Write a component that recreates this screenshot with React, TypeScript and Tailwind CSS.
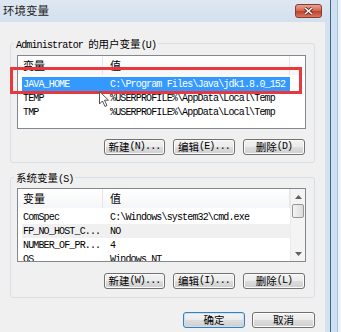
import React from "react";

type Var = { name: string; value: string; selected?: boolean; hover?: boolean };

const userVars: Var[] = [
  { name: "JAVA_HOME", value: "C:\\Program Files\\Java\\jdk1.8.0_152", selected: true },
  { name: "TEMP", value: "%USERPROFILE%\\AppData\\Local\\Temp" },
  { name: "TMP", value: "%USERPROFILE%\\AppData\\Local\\Temp" },
];

const sysVars: Var[] = [
  { name: "ComSpec", value: "C:\\Windows\\system32\\cmd.exe" },
  { name: "FP_NO_HOST_C...", value: "NO", hover: true },
  { name: "NUMBER_OF_PR...", value: "4" },
  { name: "OS", value: "Windows_NT" },
];

// latin text is a narrow serif mono in the shot
const M = ({ children }: { children: React.ReactNode }) => (
  <span className="font-['Liberation_Mono',monospace] text-[10px] tracking-[-0.85px]">{children}</span>
);

const Header = () => (
  <div className="flex h-[19px] shrink-0 bg-gradient-to-b from-white to-[#f5f6f7] text-[11px]">
    <div className="flex w-[85px] items-center border-r border-[#e3e5e8] pl-[5px]">变量</div>
    <div className="flex w-[187px] items-center border-r border-[#e3e5e8] pl-[7px]">值</div>
    <div className="flex-1" />
  </div>
);

const Row = ({ v }: { v: Var }) => (
  <div
    className={`ml-[4px] flex h-[14px] w-[268px] shrink-0 items-center ${
      v.selected ? "bg-[#3399ff] text-white" : v.hover ? "bg-[#f0f0f0]" : ""
    }`}
  >
    <div className="w-[81px] whitespace-nowrap pl-[1px]"><M>{v.name}</M></div>
    <div className="w-[187px] overflow-hidden whitespace-nowrap pl-[7px]"><M>{v.value}</M></div>
  </div>
);

const Btn = ({ children, w, def }: { children: React.ReactNode; w: string; def?: boolean }) => (
  <button
    className={`${w} flex h-[16px] items-center justify-center rounded-[3px] border text-black bg-[linear-gradient(#f3f3f3_0%,#ebebeb_48%,#dddddd_52%,#cfcfcf_100%)] ${
      def ? "border-[#3c7fb1] shadow-[inset_0_0_0_1px_#bfe3fb]" : "border-[#707070] shadow-[inset_0_0_0_1px_#fbfbfb]"
    }`}
  >
    {children}
  </button>
);

const Group = ({ label, children, className }: { label: React.ReactNode; children: React.ReactNode; className: string }) => (
  <div className={`relative ml-[10px] w-[305px] rounded-[3px] border border-[#d5dfe5] pl-[6px] pr-[8px] ${className}`}>
    <div className="absolute -top-[7px] left-[3px] bg-[#f0f0f0] px-[2px] leading-[13px]">{label}</div>
    {children}
  </div>
);

const Arrow = ({ up }: { up?: boolean }) => (
  <div className="flex h-[15px] items-center justify-center">
    <svg width="7" height="4" viewBox="0 0 7 4">
      <path d={up ? "M0 4 L3.5 0 L7 4 Z" : "M0 0 L3.5 4 L7 0 Z"} fill="#606060" />
    </svg>
  </div>
);

export default function App() {
  return (
    <div className="relative flex h-[332px] w-[341px] overflow-hidden font-['Noto_Sans_CJK_SC',sans-serif] text-[10.5px] leading-none text-black">
      <div className="flex w-[331px] flex-col border-r border-[#3b6783] bg-[#d4e1ef]">
        <div className="flex h-[22px] shrink-0 items-center bg-gradient-to-b from-[#dfe8f2] to-[#d3e0ee] pl-[3px]">
          <span className="text-[11.5px] text-[#1e1e1e]">环境变量</span>
          <div className="ml-auto mr-[8px] flex h-[14px] w-[27px] items-center justify-center rounded-[3px] border border-[#8a3a30] bg-[linear-gradient(#e8a493_0%,#d26b55_45%,#c0432c_55%,#d9765f_100%)]">
            <svg width="9" height="8" viewBox="0 0 9 8">
              <path d="M1 1 L8 7 M8 1 L1 7" stroke="#5a2018" strokeWidth="3" />
              <path d="M1 1 L8 7 M8 1 L1 7" stroke="#fff" strokeWidth="1.6" />
            </svg>
          </div>
        </div>
        <div className="flex flex-1">
          <div className="w-[325px] bg-[#f0f0f0]">
            <Group
              className="mt-[21px] pb-[7px] pt-[11px]"
              label={<><M>Administrator </M>的用户变量<M>(U)</M></>}
            >
              <div className="flex h-[74px] flex-col border border-[#828790] bg-white">
                <Header />
                <div className="h-[2px] shrink-0" />
                {userVars.map((v) => <Row key={v.name} v={v} />)}
              </div>
              <div className="mr-[1px] mt-[10px] flex justify-end gap-[8px]">
                <Btn w="w-[61px]">新建<M>(N)...</M></Btn>
                <Btn w="w-[62px]">编辑<M>(E)...</M></Btn>
                <Btn w="w-[62px]">删除<M>(D)</M></Btn>
              </div>
            </Group>

            <Group className="mt-[14px] pb-[8px] pt-[10px]" label={<>系统变量<M>(S)</M></>}>
              <div className="flex h-[74px] border border-[#828790] bg-white">
                <div className="flex w-[272px] flex-col overflow-hidden">
                  <Header />
                  <div className="h-[2px] shrink-0" />
                  {sysVars.map((v) => <Row key={v.name} v={v} />)}
                </div>
                <div className="flex flex-1 flex-col border-l border-[#ececec] bg-[#f4f4f4]">
                  <Arrow up />
                  <div className="mx-[1px] h-[14px] rounded-[2px] border border-[#979797] bg-gradient-to-r from-[#f4f4f4] to-[#dcdcdc]" />
                  <div className="flex-1" />
                  <Arrow />
                </div>
              </div>
              <div className="mr-[1px] mt-[11px] flex justify-end gap-[8px]">
                <Btn w="w-[61px]">新建<M>(W)...</M></Btn>
                <Btn w="w-[62px]">编辑<M>(I)...</M></Btn>
                <Btn w="w-[62px]">删除<M>(L)</M></Btn>
              </div>
            </Group>

            <div className="mr-[10px] mt-[14px] flex justify-end gap-[7px]">
              <Btn w="w-[62px]" def>确定</Btn>
              <Btn w="w-[63px]">取消</Btn>
            </div>
          </div>
        </div>
      </div>
      <div className="flex flex-1">
        <div className="w-[6px] bg-[#cfe0f2]" />
        <div className="flex-1 border-l border-[#a9bfd6] bg-[#eef3f9]" />
      </div>

      {/* red annotation box over the JAVA_HOME row */}
      <div className="absolute left-[10px] top-[67px] h-[27px] w-[292px] border-[3px] border-[#e8383d]" />
      {/* mouse pointer */}
      <svg className="absolute left-[99px] top-[91px]" width="11" height="17" viewBox="0 0 11 17">
        <path d="M0.5 0.5 L0.5 13 L3.5 10 L6 15.5 L8 14.5 L5.5 9.2 L9.5 9.2 Z" fill="#fff" stroke="#555" strokeWidth="1" />
      </svg>
    </div>
  );
}
